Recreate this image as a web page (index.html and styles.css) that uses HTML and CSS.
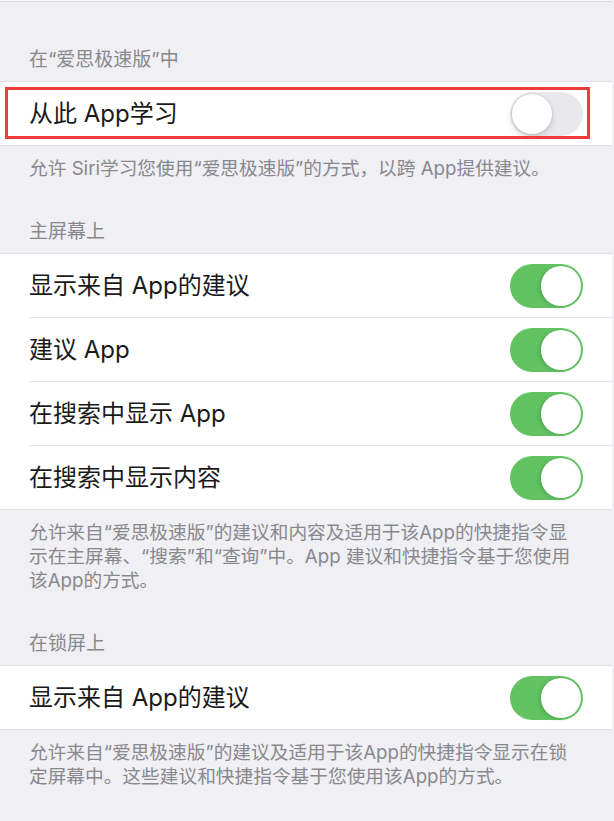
FILE: index.html
```html
<!DOCTYPE html>
<html lang="zh-CN">
<head>
<meta charset="utf-8">
<title>Siri 与搜索</title>
<link rel="stylesheet" href="styles.css">
</head>
<body>
<div class="page">
  <div class="top-edge"></div>

  <div class="group-header first">在“爱思极速版”中</div>
  <div class="group">
    <div class="row highlighted">
      <span class="label">从此 App学习</span>
      <span class="switch off"><span class="knob"></span></span>
      <span class="mark"></span>
    </div>
  </div>
  <div class="group-footer">允许 Siri学习您使用“爱思极速版”的方式，以跨 App提供建议。</div>

  <div class="group-header">主屏幕上</div>
  <div class="group">
    <div class="row">
      <span class="label">显示来自 App的建议</span>
      <span class="switch on"><span class="knob"></span></span>
    </div>
    <div class="row">
      <span class="label">建议 App</span>
      <span class="switch on"><span class="knob"></span></span>
    </div>
    <div class="row">
      <span class="label">在搜索中显示 App</span>
      <span class="switch on"><span class="knob"></span></span>
    </div>
    <div class="row">
      <span class="label">在搜索中显示内容</span>
      <span class="switch on"><span class="knob"></span></span>
    </div>
  </div>
  <div class="group-footer">允许来自“爱思极速版”的建议和内容及适用于该App的快捷指令显<br>示在主屏幕、“搜索”和“查询”中。App 建议和快捷指令基于您使用<br>该App的方式。</div>

  <div class="group-header">在锁屏上</div>
  <div class="group">
    <div class="row">
      <span class="label">显示来自 App的建议</span>
      <span class="switch on"><span class="knob"></span></span>
    </div>
  </div>
  <div class="group-footer">允许来自“爱思极速版”的建议及适用于该App的快捷指令显示在锁<br>定屏幕中。这些建议和快捷指令基于您使用该App的方式。</div>
</div>
</body>
</html>
```

FILE: styles.css
```css
html, body {
  margin: 0;
  padding: 0;
  background: #efeff4;
}

body {
  font-family: "Inter", "Noto Sans CJK SC", sans-serif;
  color: #1a1a1a;
}

.page {
  width: 612px;
  min-height: 821px;
  background: #efeff4;
}

.top-edge {
  height: 1px;
  background: #f6f6f8;
  border-bottom: 1px solid #d9d9de;
}

.group-header {
  font-size: 19px;
  line-height: 20px;
  color: #88888d;
  padding: 21px 29px 11px;
}

.group-header.first {
  padding-top: 48px;
}

.group {
  background: #ffffff;
  border-top: 1px solid #e0e0e5;
  border-bottom: 1px solid #e0e0e5;
}

.row {
  position: relative;
  height: 63px;
  display: flex;
  align-items: center;
  justify-content: space-between;
  padding: 0 29px;
}

.row + .row::before {
  content: "";
  position: absolute;
  left: 29px;
  right: 0;
  top: -1px;
  height: 1px;
  background: #e3e3e6;
}

.row + .row {
  margin-top: 1px;
}

.label {
  font-size: 24px;
  line-height: 30px;
  white-space: nowrap;
}

.switch {
  position: relative;
  width: 73px;
  height: 44px;
  border-radius: 22px;
  box-sizing: border-box;
  flex: none;
}

.switch.on {
  background: #63c363;
}

.switch.off {
  background: #e9e9eb;
}

.knob {
  position: absolute;
  top: 2px;
  width: 40px;
  height: 40px;
  border-radius: 50%;
  background: #ffffff;
}

.switch.on .knob {
  right: 2px;
  box-shadow: -2px 1px 4px rgba(0, 60, 0, 0.18);
}

.switch.off .knob {
  left: 2px;
  box-shadow: 0 3px 7px rgba(0, 0, 0, 0.16), 0 0 0 1px rgba(0, 0, 0, 0.05);
}

.mark {
  position: absolute;
  left: 5px;
  right: 22px;
  top: 5px;
  bottom: 6px;
  border: 3px solid #f03b3b;
  pointer-events: none;
}

.group-footer {
  font-size: 18.7px;
  line-height: 24px;
  color: #88888d;
  padding: 11px 20px 20px 29px;
  white-space: nowrap;
}
```
